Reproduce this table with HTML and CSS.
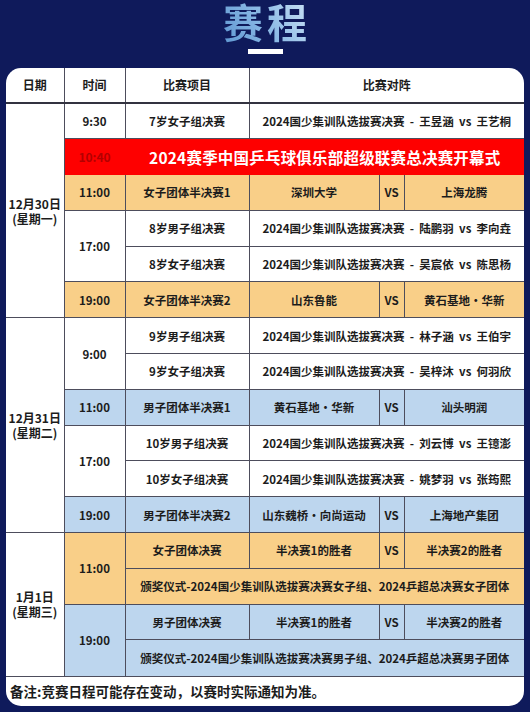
FILE: index.html
```html
<!DOCTYPE html>
<html lang="zh-CN">
<head>
<meta charset="utf-8">
<title>赛程</title>
<link rel="stylesheet" href="styles.css">
</head>
<body>
<div class="page">
  <header class="top">
    <h1 class="title">赛程</h1>
    <div class="bar"></div>
  </header>
  <div class="card">
    <table class="sched">
      <colgroup>
        <col class="c-date"><col class="c-time"><col class="c-event"><col class="c-t1"><col class="c-vs"><col class="c-t2">
      </colgroup>
      <thead>
        <tr class="head">
          <th>日期</th><th>时间</th><th>比赛项目</th><th colspan="3">比赛对阵</th>
        </tr>
      </thead>
      <tbody>
        <tr>
          <td class="date" rowspan="6"><span class="dl">12月30日</span><span class="dl">(星期一)</span></td>
          <td>9:30</td><td>7岁女子组决赛</td>
          <td colspan="3" class="match">2024国少集训队选拔赛决赛 &nbsp;-&nbsp; 王昱涵 &nbsp;vs&nbsp; 王艺桐</td>
        </tr>
        <tr class="red">
          <td class="red-time">10:40</td>
          <td colspan="4" class="banner">2024赛季中国乒乓球俱乐部超级联赛总决赛开幕式</td>
        </tr>
        <tr class="orange">
          <td>11:00</td><td>女子团体半决赛1</td><td>深圳大学</td><td>VS</td><td>上海龙腾</td>
        </tr>
        <tr>
          <td rowspan="2">17:00</td><td>8岁男子组决赛</td>
          <td colspan="3" class="match">2024国少集训队选拔赛决赛 &nbsp;-&nbsp; 陆鹏羽 &nbsp;vs&nbsp; 李向垚</td>
        </tr>
        <tr>
          <td>8岁女子组决赛</td>
          <td colspan="3" class="match">2024国少集训队选拔赛决赛 &nbsp;-&nbsp; 吴宸依 &nbsp;vs&nbsp; 陈思杨</td>
        </tr>
        <tr class="orange">
          <td>19:00</td><td>女子团体半决赛2</td><td>山东鲁能</td><td>VS</td><td>黄石基地·华新</td>
        </tr>

        <tr>
          <td class="date" rowspan="6"><span class="dl">12月31日</span><span class="dl">(星期二)</span></td>
          <td rowspan="2">9:00</td><td>9岁男子组决赛</td>
          <td colspan="3" class="match">2024国少集训队选拔赛决赛 &nbsp;-&nbsp; 林子涵 &nbsp;vs&nbsp; 王伯宇</td>
        </tr>
        <tr>
          <td>9岁女子组决赛</td>
          <td colspan="3" class="match">2024国少集训队选拔赛决赛 &nbsp;-&nbsp; 吴梓沐 &nbsp;vs&nbsp; 何羽欣</td>
        </tr>
        <tr class="blue">
          <td>11:00</td><td>男子团体半决赛1</td><td>黄石基地·华新</td><td>VS</td><td>汕头明润</td>
        </tr>
        <tr>
          <td rowspan="2">17:00</td><td>10岁男子组决赛</td>
          <td colspan="3" class="match">2024国少集训队选拔赛决赛 &nbsp;-&nbsp; 刘云博 &nbsp;vs&nbsp; 王镱澎</td>
        </tr>
        <tr>
          <td>10岁女子组决赛</td>
          <td colspan="3" class="match">2024国少集训队选拔赛决赛 &nbsp;-&nbsp; 姚梦羽 &nbsp;vs&nbsp; 张筠熙</td>
        </tr>
        <tr class="blue">
          <td>19:00</td><td>男子团体半决赛2</td><td>山东魏桥·向尚运动</td><td>VS</td><td>上海地产集团</td>
        </tr>

        <tr class="orange">
          <td class="date" rowspan="4"><span class="dl">1月1日</span><span class="dl">(星期三)</span></td>
          <td rowspan="2">11:00</td><td>女子团体决赛</td><td>半决赛1的胜者</td><td>VS</td><td>半决赛2的胜者</td>
        </tr>
        <tr class="orange">
          <td colspan="4">颁奖仪式-2024国少集训队选拔赛决赛女子组、2024乒超总决赛女子团体</td>
        </tr>
        <tr class="blue">
          <td rowspan="2">19:00</td><td>男子团体决赛</td><td>半决赛1的胜者</td><td>VS</td><td>半决赛2的胜者</td>
        </tr>
        <tr class="blue">
          <td colspan="4">颁奖仪式-2024国少集训队选拔赛决赛男子组、2024乒超总决赛男子团体</td>
        </tr>
      </tbody>
    </table>
    <p class="note">备注:竞赛日程可能存在变动，以赛时实际通知为准。</p>
  </div>
</div>
</body>
</html>
```

FILE: styles.css
```css
html, body {
  margin: 0;
  padding: 0;
}
body {
  background: #0f1a5b;
  width: 530px;
  height: 712px;
  overflow: hidden;
  font-family: "Noto Sans CJK SC", "Noto Sans", sans-serif;
  color: #1c1c1c;
}
.page {
  display: flex;
  flex-direction: column;
}
.top {
  height: 68px;
  display: flex;
  flex-direction: column;
  align-items: center;
}
.title {
  margin: -2px 0 0 4px;
  font-size: 40px;
  line-height: 46px;
  font-weight: 700;
  letter-spacing: 4px;
  background: linear-gradient(60deg, #5f97d2 0%, #8dbbe6 50%, #cfe4f6 100%);
  -webkit-background-clip: text;
  background-clip: text;
  color: transparent;
}
.bar {
  margin-top: 5px;
  width: 35px;
  height: 5px;
  background: #ffffff;
}
.card {
  margin: 0 6px;
  background: #ffffff;
  border-radius: 15px;
  overflow: hidden;
}
.sched {
  width: 100%;
  border-collapse: collapse;
  table-layout: fixed;
  border-style: hidden;
}
.c-date { width: 58px; }
.c-time { width: 61px; }
.c-event { width: 124px; }
.c-t1 { width: 130px; }
.c-vs { width: 25px; }
.c-t2 { width: 120px; }
.sched th,
.sched td {
  border: 1px solid #4d4d5c;
  padding: 0;
  text-align: center;
  vertical-align: middle;
  font-size: 11.5px;
  font-weight: 700;
  line-height: 14px;
  white-space: nowrap;
}
.head th {
  height: 34px;
  font-size: 12px;
  border-bottom: 2px solid #333340;
}
.sched tbody tr {
  height: 35.8px;
}
.sched td.date {
  background: #ffffff;
  font-size: 12px;
}
.dl {
  display: block;
  line-height: 15px;
}
.sched .match {
  font-size: 11.5px;
}
.orange td { background: #f9cf88; }
.blue td { background: #bdd6ee; }
.red td {
  background: #fe0000;
  border-color: #fe0000;
}
.red td.red-time {
  color: #b30000;
  font-size: 12px;
  font-weight: 700;
}
.red td.banner {
  color: #ffffff;
  font-size: 15.5px;
  letter-spacing: 0.2px;
}
.note {
  margin: 0;
  height: 29px;
  line-height: 28px;
  padding-left: 4px;
  font-size: 13.5px;
  font-weight: 700;
  color: #1c1c1c;
  border-top: 1px solid #4d4d5c;
}
```
